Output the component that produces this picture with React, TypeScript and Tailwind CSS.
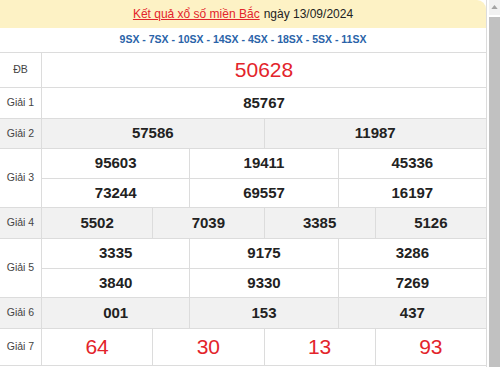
import React from 'react'

// one result row: label on the left, a grid of numbers on the right
type Prize = { label: string; rows: string[][]; gray?: boolean; big?: boolean; h?: string }

const prizes: Prize[] = [
    { label: 'ĐB', rows: [['50628']], big: true, h: 'h-[34px]' },
    { label: 'Giải 1', rows: [['85767']] },
    { label: 'Giải 2', rows: [['57586', '11987']], gray: true, h: 'h-[29px]' },
    { label: 'Giải 3', rows: [['95603', '19411', '45336'], ['73244', '69557', '16197']], h: 'h-[29px]' },
    { label: 'Giải 4', rows: [['5502', '7039', '3385', '5126']], gray: true },
    { label: 'Giải 5', rows: [['3335', '9175', '3286'], ['3840', '9330', '7269']], h: 'h-[29px]' },
    { label: 'Giải 6', rows: [['001', '153', '437']], gray: true },
    { label: 'Giải 7', rows: [['64', '30', '13', '93']], big: true, h: 'h-[36px]' },
]

function PrizeRow({ p }: { p: Prize }) {
    return (
        <div className={`flex border-b border-[#dcdcdc] ${p.gray ? 'bg-[#f1f1f1]' : 'bg-white'}`}>
            <div className="w-[42px] shrink-0 border-r border-[#dcdcdc] flex items-center justify-center text-[10.5px] text-[#444]">
                {p.label}
            </div>
            <div className="flex-1 flex flex-col">
                {p.rows.map((r, i) => (
                    <div key={i} className={`flex ${p.h ?? 'h-[30px]'} ${i > 0 ? 'border-t border-[#dcdcdc]' : ''}`}>
                        {r.map((n, j) => (
                            <div
                                key={j}
                                className={`flex-1 flex items-center justify-center ${j > 0 ? 'border-l border-[#dcdcdc]' : ''} ${p.big ? 'text-[21px] text-[#e3242b]' : 'text-[15px] font-bold text-[#222]'}`}
                            >
                                {n}
                            </div>
                        ))}
                    </div>
                ))}
            </div>
        </div>
    )
}

export default function App() {
    return (
        <div className="w-[500px] h-[367px] overflow-hidden flex bg-white font-['Liberation_Sans',Arial,sans-serif]">
            <div className="w-[487px] shrink-0 border-r border-[#dcdcdc]">
                {/* title */}
                <div className="h-[28px] bg-[#fdf2c5] rounded-tr-[9px] flex items-center justify-center text-[12px] text-[#222]">
                    <a className="text-[#e3242b] underline">Kết quả xổ số miền Bắc</a>
                    <span className="ml-1">ngày 13/09/2024</span>
                </div>
                {/* codes */}
                <div className="h-[25px] border-b border-[#dcdcdc] flex items-center justify-center text-[10.5px] font-bold text-[#2a63a8]">
                    9SX - 7SX - 10SX - 14SX - 4SX - 18SX - 5SX - 11SX
                </div>
                {prizes.map(p => <PrizeRow key={p.label} p={p} />)}
            </div>

            {/* scrollbar */}
            <div className="flex-1 bg-white flex flex-col items-end">
                <div className="w-[11px] h-[17px] flex items-center justify-center bg-[#f1f1f1]">
                    <svg width="7" height="4" viewBox="0 0 8 5"><path d="M0 5 L4 0 L8 5 Z" fill="#a3a3a3" /></svg>
                </div>
                <div className="w-[11px] h-[400px] bg-[#c1c1c1] mt-[2px]" />
            </div>
        </div>
    )
}
